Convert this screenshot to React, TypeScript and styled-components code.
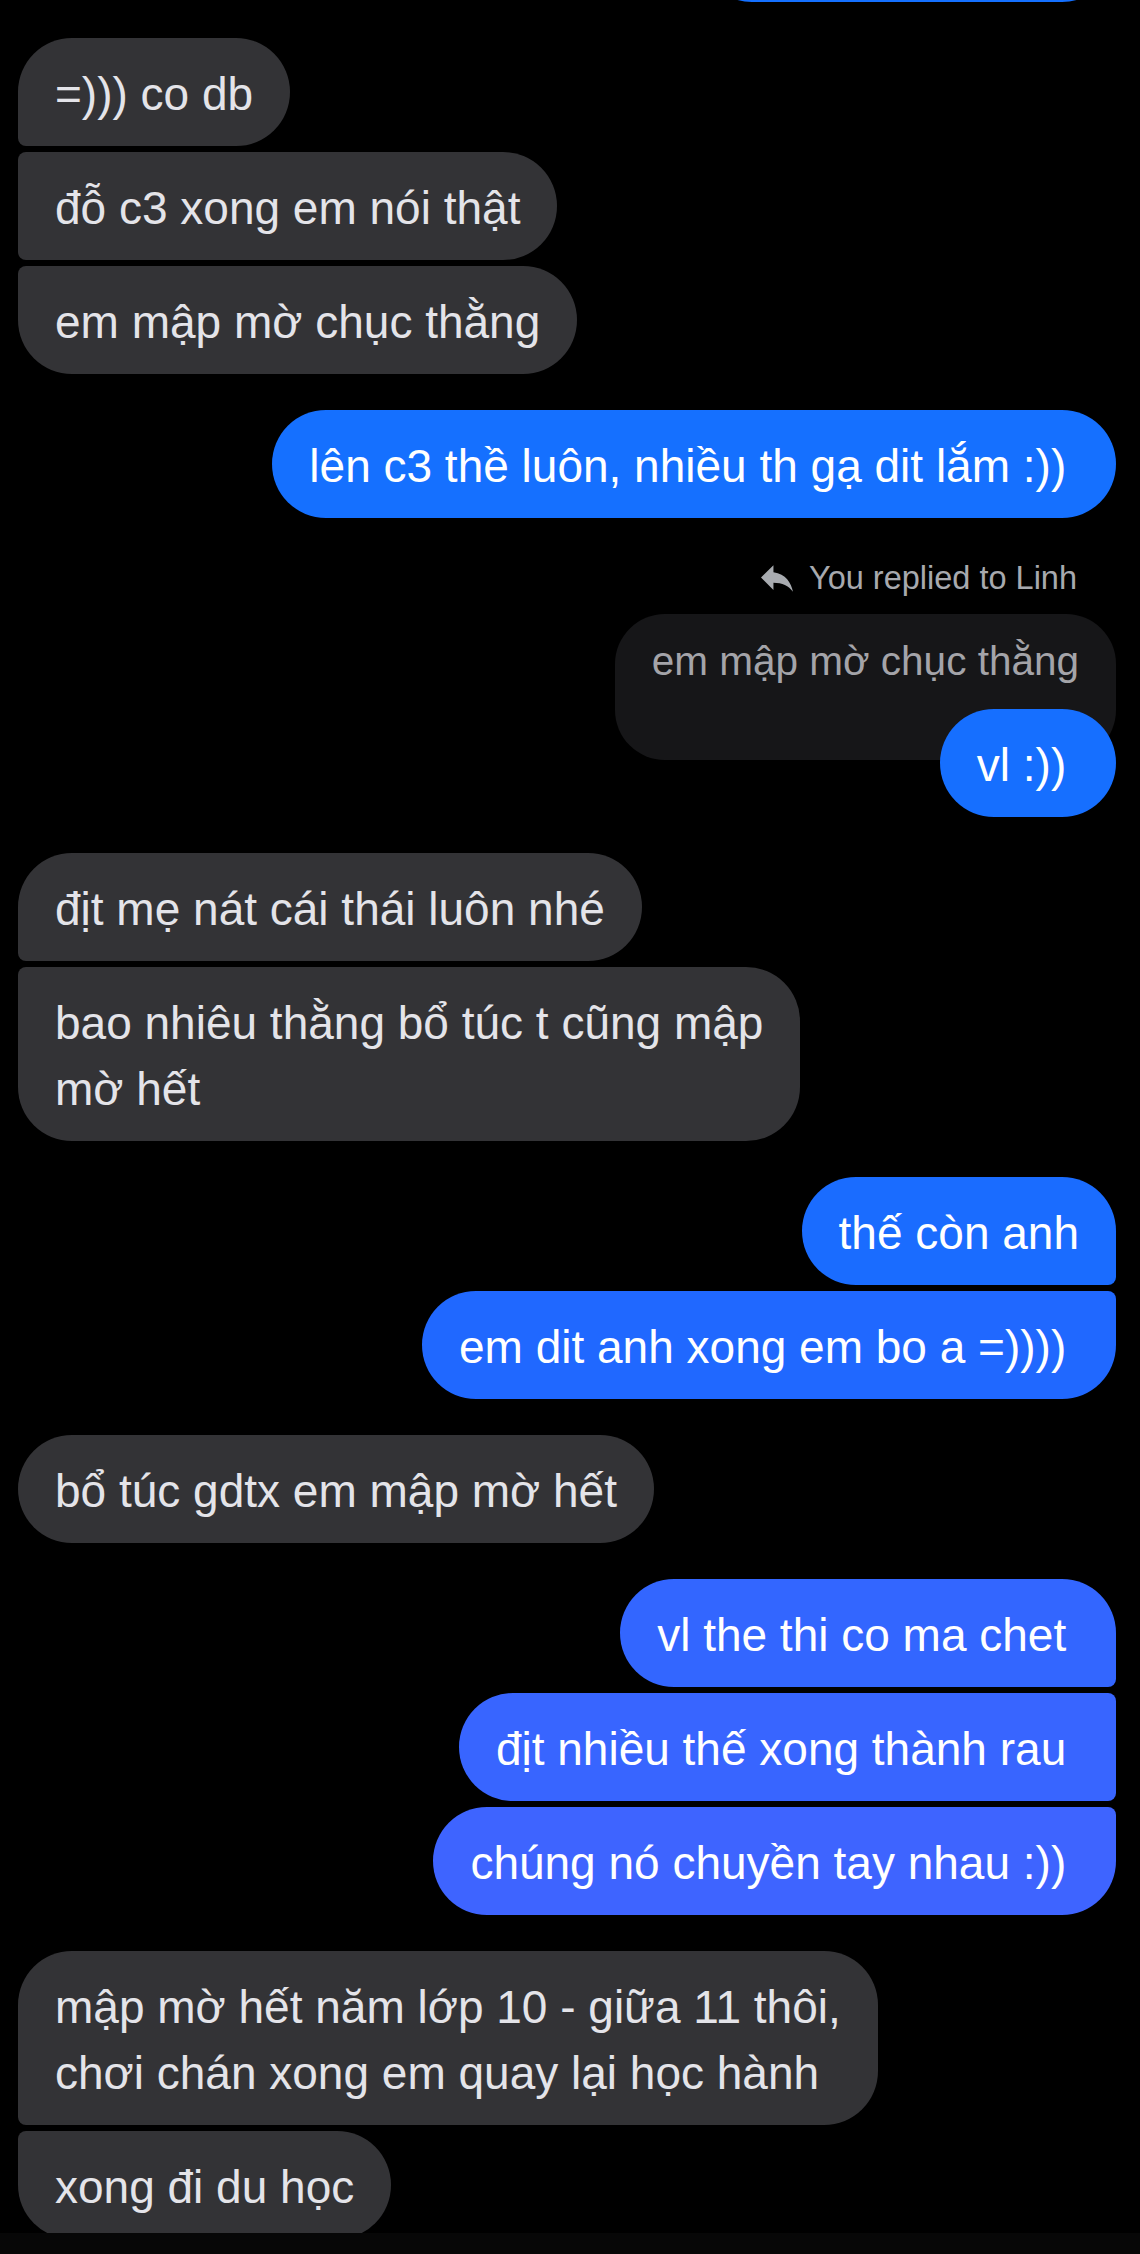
import styled, { createGlobalStyle } from 'styled-components';

const GlobalStyle = createGlobalStyle`
  html, body {
    margin: 0;
    padding: 0;
    background: #000;
  }
  body {
    font-family: "Liberation Sans", Arial, sans-serif;
    -webkit-font-smoothing: antialiased;
  }
`;

type Side = 'in' | 'out';
type Pos = 'single' | 'first' | 'middle' | 'last';

const BIG = 54;
const SMALL = 8;

const corners = (side: Side, pos: Pos) => {
  const top = pos === 'single' || pos === 'first' ? BIG : SMALL;
  const bottom = pos === 'single' || pos === 'last' ? BIG : SMALL;
  return side === 'in'
    ? `${top}px ${BIG}px ${BIG}px ${bottom}px`
    : `${BIG}px ${top}px ${bottom}px ${BIG}px`;
};

const Screen = styled.div`
  width: 1140px;
  height: 2254px;
  display: flex;
  flex-direction: column;
  overflow: hidden;
  background: #000;
`;

const Thread = styled.div`
  flex: 1;
  min-height: 0;
  overflow: hidden;
  display: flex;
  flex-direction: column;
  gap: 36px;
  padding: 0 24px 0 18px;
`;

const Group = styled.div<{ $side: Side }>`
  display: flex;
  flex-direction: column;
  gap: 6px;
  align-items: ${(p) => (p.$side === 'out' ? 'flex-end' : 'flex-start')};
  &:first-child {
    margin-top: -106px;
  }
`;

const Bubble = styled.div<{ $side: Side; $pos: Pos; $tone?: string }>`
  position: relative;
  box-sizing: border-box;
  padding: 23px 37px 19px;
  font-size: 46px;
  line-height: 66px;
  white-space: pre-line;
  color: ${(p) => (p.$side === 'out' ? '#ffffff' : '#e4e4e9')};
  background: ${(p) => p.$tone ?? '#333336'};
  border-radius: ${(p) => corners(p.$side, p.$pos)};
`;

const ClippedBubble = styled(Bubble)`
  width: 418px;
  height: 108px;
`;

const ReplyHeader = styled.div`
  display: flex;
  align-items: center;
  gap: 16px;
  padding: 4px 39px 10px 0;
  font-size: 32.5px;
  line-height: 40px;
  color: #a7a9ae;
`;

const ReplyQuote = styled.div`
  box-sizing: border-box;
  padding: 21px 37px 73px;
  margin-bottom: -57px;
  font-size: 40.5px;
  line-height: 52px;
  color: #a4a4a9;
  background: #161618;
  border-radius: 50px;
`;

const Composer = styled.div`
  height: 21px;
  flex-shrink: 0;
  background: #070707;
`;

const ReplyIcon = () => (
  <svg width="32" height="27" viewBox="3 5 18 15" fill="#a8abb0">
    <path d="M10 9V5l-7 7 7 7v-4.1c5 0 8.5 1.6 11 5.1-1-5-4-10-11-11z" />
  </svg>
);

type Msg = { text: string; tone?: string };
type Block = {
  side: Side;
  msgs: Msg[];
  reply?: { label: string; quote: string };
};

// trailing spaces typed in the messages are kept as non-breaking spaces
const NB = '\u00a0';

const thread: Block[] = [
  {
    side: 'in',
    msgs: [{ text: '=))) co db' }, { text: 'đỗ c3 xong em nói thật' }, { text: 'em mập mờ chục thằng' }],
  },
  { side: 'out', msgs: [{ text: 'lên c3 thề luôn, nhiều th gạ dit lắm :))' + NB, tone: '#1570ff' }] },
  {
    side: 'out',
    reply: { label: 'You replied to Linh', quote: 'em mập mờ chục thằng' },
    msgs: [{ text: 'vl :))' + NB, tone: '#166fff' }],
  },
  {
    side: 'in',
    msgs: [{ text: 'địt mẹ nát cái thái luôn nhé' }, { text: 'bao nhiêu thằng bổ túc t cũng mập\nmờ hết' }],
  },
  {
    side: 'out',
    msgs: [
      { text: 'thế còn anh', tone: '#1a6cff' },
      { text: 'em dit anh xong em bo a =))))' + NB, tone: '#2068ff' },
    ],
  },
  { side: 'in', msgs: [{ text: 'bổ túc gdtx em mập mờ hết' }] },
  {
    side: 'out',
    msgs: [
      { text: 'vl the thi co ma chet' + NB, tone: '#3366ff' },
      { text: 'địt nhiều thế xong thành rau' + NB, tone: '#3865ff' },
      { text: 'chúng nó chuyền tay nhau :))' + NB, tone: '#3e64ff' },
    ],
  },
  {
    side: 'in',
    msgs: [
      { text: 'mập mờ hết năm lớp 10 - giữa 11 thôi,\nchơi chán xong em quay lại học hành' },
      { text: 'xong đi du học' },
    ],
  },
];

const posOf = (i: number, n: number): Pos => {
  if (n === 1) return 'single';
  if (i === 0) return 'first';
  if (i === n - 1) return 'last';
  return 'middle';
};

export default function App() {
  return (
    <>
      <GlobalStyle />
      <Screen>
        <Thread>
          <Group $side="out">
            <ClippedBubble $side="out" $pos="single" $tone="#1470ff" />
          </Group>
          {thread.map((block, bi) => (
            <Group key={bi} $side={block.side}>
              {block.reply && (
                <>
                  <ReplyHeader>
                    <ReplyIcon />
                    <span>{block.reply.label}</span>
                  </ReplyHeader>
                  <ReplyQuote>{block.reply.quote}</ReplyQuote>
                </>
              )}
              {block.msgs.map((m, i) => (
                <Bubble key={i} $side={block.side} $pos={posOf(i, block.msgs.length)} $tone={m.tone}>
                  {m.text}
                </Bubble>
              ))}
            </Group>
          ))}
        </Thread>
        <Composer />
      </Screen>
    </>
  );
}
